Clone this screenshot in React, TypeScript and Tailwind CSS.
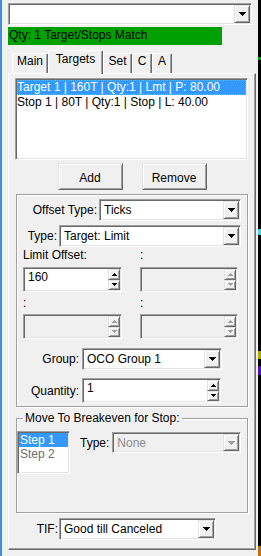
import type { ReactNode } from "react";

const sunken =
  "border border-t-[#a0a0a0] border-l-[#a0a0a0] border-r-white border-b-white p-px shadow-[inset_1px_1px_0_#696969,inset_-1px_-1px_0_#e3e3e3]";
const raised =
  "border border-t-[#e3e3e3] border-l-[#e3e3e3] border-r-[#696969] border-b-[#696969] shadow-[inset_1px_1px_0_#ffffff,inset_-1px_-1px_0_#a0a0a0]";
const etched =
  "border border-[#a0a0a0] shadow-[inset_1px_1px_0_#ffffff,1px_1px_0_#ffffff]";

function Arrow({ up = false, small = false, color = "#000" }) {
  const rows = small ? [5, 3, 1] : [7, 5, 3, 1];
  const w = rows[0];
  const ordered = up ? [...rows].reverse() : rows;
  return (
    <svg width={w} height={rows.length} shapeRendering="crispEdges">
      {ordered.map((r, i) => (
        <rect key={i} x={(w - r) / 2} y={i} width={r} height={1} fill={color} />
      ))}
    </svg>
  );
}

function Combo({
  value,
  className,
  disabled = false,
}: {
  value?: string;
  className: string;
  disabled?: boolean;
}) {
  return (
    <div
      className={`${sunken} flex ${className} ${
        disabled ? "bg-[#f0f0f0] text-[#8d8d8d]" : "bg-white"
      }`}
    >
      <div className="flex flex-1 items-center overflow-hidden whitespace-nowrap pl-[3px] pt-px leading-[15px]">
        {value}
      </div>
      <div
        className={`${raised} flex w-[16px] items-center justify-center bg-[#f0f0f0]`}
      >
        <Arrow color={disabled ? "#a0a0a0" : "#000"} />
      </div>
    </div>
  );
}

function Spin({
  value,
  className,
  disabled = false,
}: {
  value?: string;
  className: string;
  disabled?: boolean;
}) {
  const c = disabled ? "#a0a0a0" : "#000";
  return (
    <div
      className={`${sunken} flex h-[25px] ${className} ${
        disabled ? "bg-[#f0f0f0]" : "bg-white"
      }`}
    >
      <div className="flex-1 pl-[3px] pt-px leading-[15px]">{value}</div>
      <div className="flex w-[12px] flex-col">
        <div className={`${raised} flex flex-1 items-center justify-center bg-[#f0f0f0]`}>
          <Arrow up small color={c} />
        </div>
        <div className={`${raised} flex flex-1 items-center justify-center bg-[#f0f0f0]`}>
          <Arrow small color={c} />
        </div>
      </div>
    </div>
  );
}

function Tab({
  label,
  className,
  active = false,
}: {
  label: string;
  className: string;
  active?: boolean;
}) {
  return (
    <div
      className={`flex justify-center rounded-t-[2px] border-t border-l border-r border-t-white border-l-white border-r-[#696969] bg-[#f0f0f0] leading-[15px] shadow-[inset_-1px_0_0_#a0a0a0] ${className} ${
        active ? "relative z-10 -mb-px h-[24px] pt-px" : "h-[20px]"
      }`}
    >
      {label}
    </div>
  );
}

function Button({ children }: { children: ReactNode }) {
  return (
    <div
      className={`${raised} flex h-[27px] w-[65px] justify-center bg-[#f0f0f0] pt-[7px] leading-[15px]`}
    >
      {children}
    </div>
  );
}

export default function App() {
  return (
    <div className="flex h-[556px] w-[261px] overflow-hidden bg-[#f0f0f0] font-['Liberation_Sans',Arial,sans-serif] text-[12px] text-black">
      <div className="w-[2px] bg-[#3d8de0]" />

      <div className="flex w-[256px] flex-col pl-[6px] pt-[3px]">
        <Combo className="h-[22px] w-[244px]" />

        <div className="mt-[2px] h-[18px] w-[214px] bg-[#00a000] pl-px leading-[16px]">
          Qty: 1 Target/Stops Match
        </div>

        <div className="mt-[5px] flex h-[23px] items-end pl-[4px]">
          <Tab label="Main" className="w-[36px]" />
          <Tab label="Targets" className="w-[55px]" active />
          <Tab label="Set" className="w-[29px]" />
          <Tab label="C" className="w-[20px]" />
          <Tab label="A" className="w-[20px]" />
        </div>

        <div className="flex h-[477px] w-[248px] flex-col border border-t-white border-l-white border-r-[#696969] border-b-[#696969] shadow-[inset_-1px_-1px_0_#a0a0a0]">
          {/* orders list */}
          <div className={`${sunken} ml-[6px] mt-[4px] h-[82px] w-[233px] bg-white`}>
            <div className="h-[15px] whitespace-nowrap bg-[#3399ff] leading-[15px] text-white outline-1 outline-dotted -outline-offset-1 outline-[#f0a040]">
              Target 1 | 160T | Qty:1 | Lmt | P: 80.00
            </div>
            <div className="h-[15px] whitespace-nowrap leading-[15px]">
              Stop 1 | 80T | Qty:1 | Stop | L: 40.00
            </div>
          </div>

          <div className="mt-[3px] flex justify-center gap-[19px]">
            <Button>Add</Button>
            <Button>Remove</Button>
          </div>

          {/* order settings */}
          <div className={`${etched} ml-[7px] mt-[4px] flex h-[213px] w-[232px] flex-col`}>
            <div className="mt-[4px] flex items-center justify-end gap-[2px] pr-[6px]">
              <span>Offset Type:</span>
              <Combo value="Ticks" className="h-[22px] w-[142px]" />
            </div>
            <div className="mt-[4px] flex items-center justify-end gap-[2px] pr-[6px]">
              <span>Type:</span>
              <Combo value="Target: Limit" className="h-[22px] w-[182px]" />
            </div>

            <div className="mt-px grid grid-cols-[117px_98px] pl-[6px] leading-[15px]">
              <span>Limit Offset:</span>
              <span>:</span>
            </div>
            <div className="mt-[4px] grid grid-cols-[117px_98px] pl-[6px]">
              <Spin value="160" className="w-[99px]" />
              <Spin className="w-[98px]" disabled />
            </div>
            <div className="mt-[4px] grid grid-cols-[117px_98px] pl-[6px] leading-[15px]">
              <span>:</span>
              <span>:</span>
            </div>
            <div className="mt-[3px] grid grid-cols-[117px_98px] pl-[6px]">
              <Spin className="w-[99px]" disabled />
              <Spin className="w-[98px]" disabled />
            </div>

            <div className="mt-[9px] flex items-center">
              <span className="w-[62px] text-right">Group:</span>
              <Combo value="OCO Group 1" className="ml-[3px] h-[22px] w-[140px]" />
            </div>
            <div className="mt-[8px] flex items-center">
              <span className="w-[62px] text-right">Quantity:</span>
              <Spin value="1" className="ml-[3px] w-[139px]" />
            </div>
          </div>

          {/* breakeven */}
          <fieldset className={`${etched} ml-[7px] mt-[4px] h-[102px] w-[232px]`}>
            <legend className="ml-[6px] px-[2px] leading-[14px]">
              Move To Breakeven for Stop:
            </legend>
            <div className="mt-[6px] flex items-start">
              <div className={`${sunken} h-[43px] w-[53px] bg-white`}>
                <div className="h-[14px] bg-[#3399ff] pl-px leading-[15px] text-white">
                  Step 1
                </div>
                <div className="h-[14px] pl-px leading-[15px] text-[#6d6d6d]">Step 2</div>
              </div>
              <div className="ml-[10px] mt-px flex items-center gap-[3px]">
                <span>Type:</span>
                <Combo value="None" className="h-[21px] w-[129px]" disabled />
              </div>
            </div>
          </fieldset>

          <div className="mt-[5px] flex items-center">
            <span className="w-[49px] text-right">TIF:</span>
            <Combo value="Good till Canceled" className="ml-px h-[22px] w-[157px]" />
          </div>
        </div>
      </div>

      <div className="flex w-[3px] flex-col bg-black">
        <div className="h-[57px]" />
        <div className="h-[3px] bg-[#00a000]" />
        <div className="h-[169px]" />
        <div className="h-[6px] bg-[#40d8e0]" />
        <div className="h-[116px]" />
        <div className="h-[8px] bg-[#b0a800]" />
        <div className="h-[7px]" />
        <div className="h-[9px] bg-[#5010b0]" />
        <div className="h-[171px]" />
        <div className="h-[10px] bg-[#c07010]" />
      </div>
    </div>
  );
}
